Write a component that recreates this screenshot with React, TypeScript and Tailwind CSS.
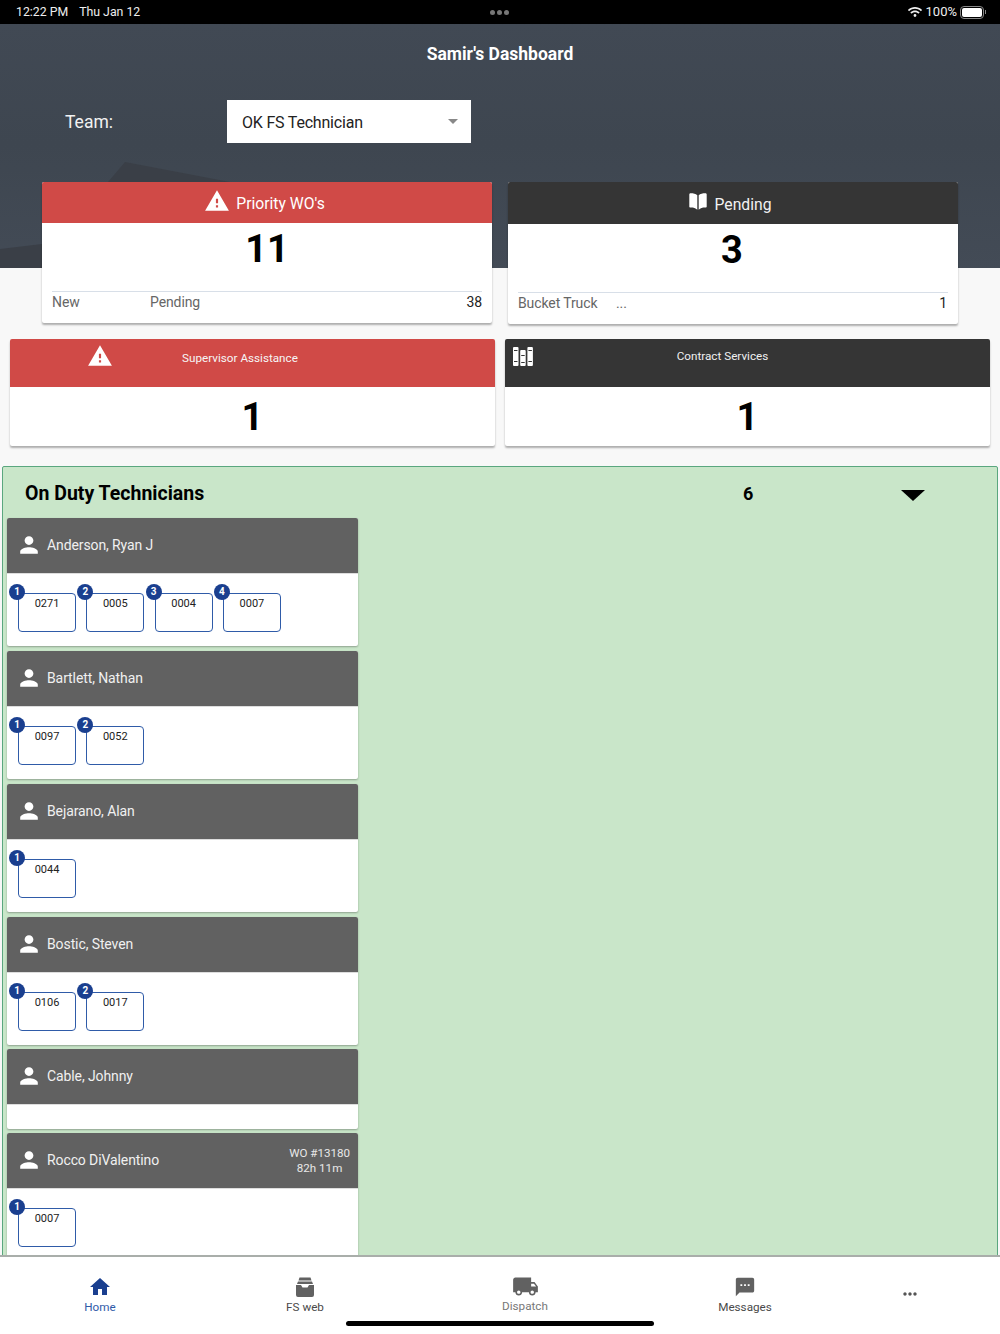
import React from "react";
import { MdHome, MdLocalShipping, MdMoreHoriz, MdPerson, MdSms, MdWarning } from "react-icons/md";
import { FaWifi } from "react-icons/fa";

const technicians = [
  { name: "Anderson, Ryan J", orders: ["0271", "0005", "0004", "0007"] },
  { name: "Bartlett, Nathan", orders: ["0097", "0052"] },
  { name: "Bejarano, Alan", orders: ["0044"] },
  { name: "Bostic, Steven", orders: ["0106", "0017"] },
  { name: "Cable, Johnny", orders: [] as string[] },
  { name: "Rocco DiValentino", orders: ["0007"], wo: "WO #13180", time: "82h 11m" },
];

const BooksIcon = () => (
  <svg width="20" height="19" viewBox="0 0 20 19" fill="#fff">
    <rect x="0" y="0" width="5.5" height="19" rx="1" />
    <rect x="7.2" y="3" width="5.5" height="16" rx="1" />
    <rect x="14.4" y="0" width="5.5" height="19" rx="1" />
    <g fill="#353535">
      <rect x="1" y="3" width="3.5" height="1" />
      <rect x="1" y="14" width="3.5" height="1" />
      <rect x="8.2" y="8" width="3.5" height="1" />
      <rect x="8.2" y="15" width="3.5" height="1" />
      <rect x="15.4" y="3" width="3.5" height="1" />
      <rect x="15.4" y="14" width="3.5" height="1" />
    </g>
  </svg>
);

const OpenBookIcon = () => (
  <svg width="18" height="17" viewBox="0 0 18 17" fill="#fff">
    <path d="M8.3 2.2C6.8.8 4.2.3 1.8.3.9.3.3.8.3 1.5v12.2c0 .5.5.8 1 .8 2.7-.1 5.3.4 7 2.2z" />
    <path d="M9.7 2.2C11.2.8 13.8.3 16.2.3c.9 0 1.5.5 1.5 1.2v12.2c0 .5-.5.8-1 .8-2.7-.1-5.3.4-7 2.2z" />
  </svg>
);

const TrayIcon = () => (
  <svg width="20" height="20" viewBox="0 0 20 20" fill="#616161">
    <path d="M4.5 0.5h11l1 3h-13z" />
    <path d="M3 4.5h14l1 2.5H2z" />
    <path d="M1 8h5l1.5 2.5h5L14 8h5v10a2 2 0 0 1-2 2H3a2 2 0 0 1-2-2z" />
  </svg>
);

const TechnicianCard = ({ tech }: { tech: (typeof technicians)[number] }) => (
  <div className={`w-[351px] shrink-0 rounded-[2px] bg-white shadow-[0_1px_2px_rgba(0,0,0,0.3)] ${tech.orders.length === 0 ? "-my-px" : ""}`}>
    <div className="flex h-[56px] items-center rounded-t-[2px] border-b border-[#ddd] bg-[#616161] pl-[10px] pr-2 text-white">
      <MdPerson size={24} className="mr-[6px] -translate-y-px scale-110" />
      <span className="text-[14px] tracking-[-0.1px] text-[#f0f0f0]">{tech.name}</span>
      {tech.wo && (
        <div className="ml-auto text-center text-[11.6px] leading-[15px] text-[#e8e8e8]">
          <div>{tech.wo}</div>
          <div>{tech.time}</div>
        </div>
      )}
    </div>
    {tech.orders.length > 0 ? (
      <div className="flex h-[72px] gap-[10.3px] pl-[11px] pt-[19px]">
        {tech.orders.map((order, i) => (
          <div key={order} className="relative h-[39px] w-[58px] rounded-[4px] border border-[#2f5ba8] pt-[3px] text-center text-[11px] leading-[14px] text-[#222]">
            {order}
            <span className="absolute -left-[10px] -top-[10px] flex h-4 w-4 items-center justify-center rounded-full bg-[#1a3f8f] text-[10px] font-bold text-white">
              {i + 1}
            </span>
          </div>
        ))}
      </div>
    ) : (
      <div className="h-[24px]" />
    )}
  </div>
);

const NavItem = ({ icon, label, className }: { icon: React.ReactNode; label: string; className: string }) => (
  <div className={`flex flex-col items-center ${className}`}>
    <div className="flex h-5 items-center justify-center">{icon}</div>
    <span className="mt-[3px] text-[11.7px] leading-[14px]">{label}</span>
  </div>
);

export default function App() {
  return (
    <div className="relative flex h-[1334px] w-[1000px] flex-col overflow-hidden bg-[#f8f8f8] font-['Roboto',sans-serif]">
      {/* status bar */}
      <div className="relative flex h-6 shrink-0 items-center bg-black pl-4 pr-[14px] text-[12.3px] text-[#eee]">
        <span>12:22 PM</span>
        <span className="ml-[11px]">Thu Jan 12</span>
        <div className="absolute left-[490px] top-[10px] flex gap-[2px]">
          <span className="h-[5px] w-[5px] rounded-full bg-[#777]" />
          <span className="h-[5px] w-[5px] rounded-full bg-[#777]" />
          <span className="h-[5px] w-[5px] rounded-full bg-[#777]" />
        </div>
        <div className="ml-auto flex items-center">
          <FaWifi size={14} className="mr-[4px]" />
          <span className="text-[13px]">100%</span>
          <div className="ml-[3px] flex h-[13px] w-[24px] items-center rounded-[4px] border border-[#888] p-[1px]">
            <div className="h-full w-full rounded-[2px] bg-white" />
          </div>
          <span className="ml-px h-1 w-px bg-[#888]" />
        </div>
      </div>

      {/* dashboard */}
      <div className="relative min-h-0 flex-1 overflow-hidden bg-[linear-gradient(to_bottom,#414954_0,#3e4650_120px,#434b56_244px,#f8f8f8_244px)]">
        {/* dark roof shape in the hero photo */}
        <svg className="absolute left-0 top-[130px]" width="260" height="114" viewBox="0 0 260 114" fill="#3a3f47">
          <path d="M108 28 L125 8 L230 28 Z" />
          <path d="M0 95 L42 90 L42 114 L0 114 Z" />
        </svg>

        <div className="relative">
          <h1 className="pt-[19px] text-center text-[17.5px] font-bold leading-[22px] text-white">Samir's Dashboard</h1>

          <div className="mt-[35px] flex h-[43px] items-center pl-[65px]">
            <span className="w-[162px] pt-[2px] text-[17.5px] text-[#f2f2f2]">Team:</span>
            <div className="flex h-[43px] w-[244px] items-center bg-white pl-[15px] pr-[13px] text-[#222]">
              <span className="pt-[2px] text-[16px] tracking-[-0.2px]">OK FS Technician</span>
              <span className="ml-auto h-0 w-0 border-x-[5px] border-t-[5px] border-x-transparent border-t-[#888]" />
            </div>
          </div>

          <div className="mt-[39px] flex gap-4 pl-[42px]">
            <div className="h-[141px] w-[450px] overflow-hidden rounded-[2px] bg-white shadow-[0_2px_2px_rgba(0,0,0,0.3)]">
              <div className="flex h-[41px] items-center justify-center gap-[6px] bg-[#d04a47] pr-[5px] text-white">
                <MdWarning size={26} className="-translate-y-[2px]" />
                <span className="pt-[3px] text-[15.7px]">Priority WO's</span>
              </div>
              <div className="h-[68px] pt-1 text-center text-[38px] font-bold leading-[44px] text-black">11</div>
              <div className="mx-[10px] flex h-[32px] border-t border-[#d8dfe8] text-[14px] tracking-[-0.1px] text-[#666]">
                <span className="w-[98px]">New</span>
                <span>Pending</span>
                <span className="ml-auto text-[#222]">38</span>
              </div>
            </div>
            <div className="h-[142px] w-[450px] overflow-hidden rounded-[2px] bg-white shadow-[0_2px_2px_rgba(0,0,0,0.3)]">
              <div className="flex h-[42px] items-center justify-center gap-[8px] bg-[#353535] pr-[6px] text-[#f2f2f2]">
                <span className="-translate-y-[2px]"><OpenBookIcon /></span>
                <span className="pt-[3px] text-[15.7px]">Pending</span>
              </div>
              <div className="h-[68px] pr-[2px] pt-1 text-center text-[38px] font-bold leading-[44px] text-black">3</div>
              <div className="mx-[10px] flex h-[32px] border-t border-[#d8dfe8] text-[14px] tracking-[-0.1px] text-[#666]">
                <span className="w-[98px]">Bucket Truck</span>
                <span>...</span>
                <span className="ml-auto mr-px text-[#222]">1</span>
              </div>
            </div>
          </div>

          <div className="mt-[15px] flex gap-[10px] pl-[10px]">
            <div className="w-[485px] overflow-hidden rounded-[2px] bg-white shadow-[0_2px_2px_rgba(0,0,0,0.3)]">
              <div className="relative h-[48px] bg-[#d04a47] pr-[25px] pt-[11px] text-center text-[11.7px] leading-[16px] text-[#f6f6f6]">
                <MdWarning size={26} className="absolute left-[77px] top-[4px] text-white" />
                <span>Supervisor Assistance</span>
              </div>
              <div className="h-[59px] pt-2 text-center text-[38px] font-bold leading-[44px] text-black">1</div>
            </div>
            <div className="w-[485px] overflow-hidden rounded-[2px] bg-white shadow-[0_2px_2px_rgba(0,0,0,0.3)]">
              <div className="relative h-[48px] bg-[#353535] pr-[50px] pt-[9px] text-center text-[11.7px] leading-[16px] text-[#f0f0f0]">
                <span className="absolute left-[8px] top-[8px]"><BooksIcon /></span>
                <span>Contract Services</span>
              </div>
              <div className="h-[59px] pt-2 text-center text-[38px] font-bold leading-[44px] text-black">1</div>
            </div>
          </div>

          {/* on duty technicians */}
          <div className="mx-[2px] mt-[20px] h-[800px] rounded-[2px] border border-[#5aa77f] bg-[#c9e6c9] pl-1">
            <div className="flex h-[51px] items-center pt-[2px]">
              <span className="ml-[18px] w-[718px] text-[19.5px] font-bold text-black">On Duty Technicians</span>
              <span className="w-[158px] text-[18px] font-bold text-black">6</span>
              <span className="h-0 w-0 translate-y-[2px] border-x-[12px] border-t-[11px] border-x-transparent border-t-black" />
            </div>
            <div className="flex flex-col gap-[5px]">
              {technicians.map((tech) => (
                <TechnicianCard key={tech.name} tech={tech} />
              ))}
            </div>
          </div>
        </div>
      </div>

      {/* bottom tabs */}
      <div className="relative z-10 flex h-[79px] shrink-0 border-t-2 border-[#a9aeaa] bg-white pt-[20px] text-[#4a4a4a]">
        <NavItem icon={<MdHome size={24} className="text-[#1a3f8f]" />} label="Home" className="ml-[60px] w-[80px] text-[#2f5ba8]" />
        <NavItem icon={<TrayIcon />} label="FS web" className="ml-[125px] w-[80px]" />
        <NavItem icon={<MdLocalShipping size={27} className="text-[#616161]" />} label="Dispatch" className="ml-[140px] w-[80px] -translate-y-px text-[#777]" />
        <NavItem icon={<MdSms size={22} className="text-[#616161]" />} label="Messages" className="ml-[140px] w-[80px]" />
        <div className="ml-[115px] flex h-[33px] w-[20px] items-center justify-center">
          <MdMoreHoriz size={24} className="text-[#555]" />
        </div>
        <div className="absolute left-[346px] top-[64px] h-[5px] w-[308px] rounded-full bg-black" />
      </div>
    </div>
  );
}
